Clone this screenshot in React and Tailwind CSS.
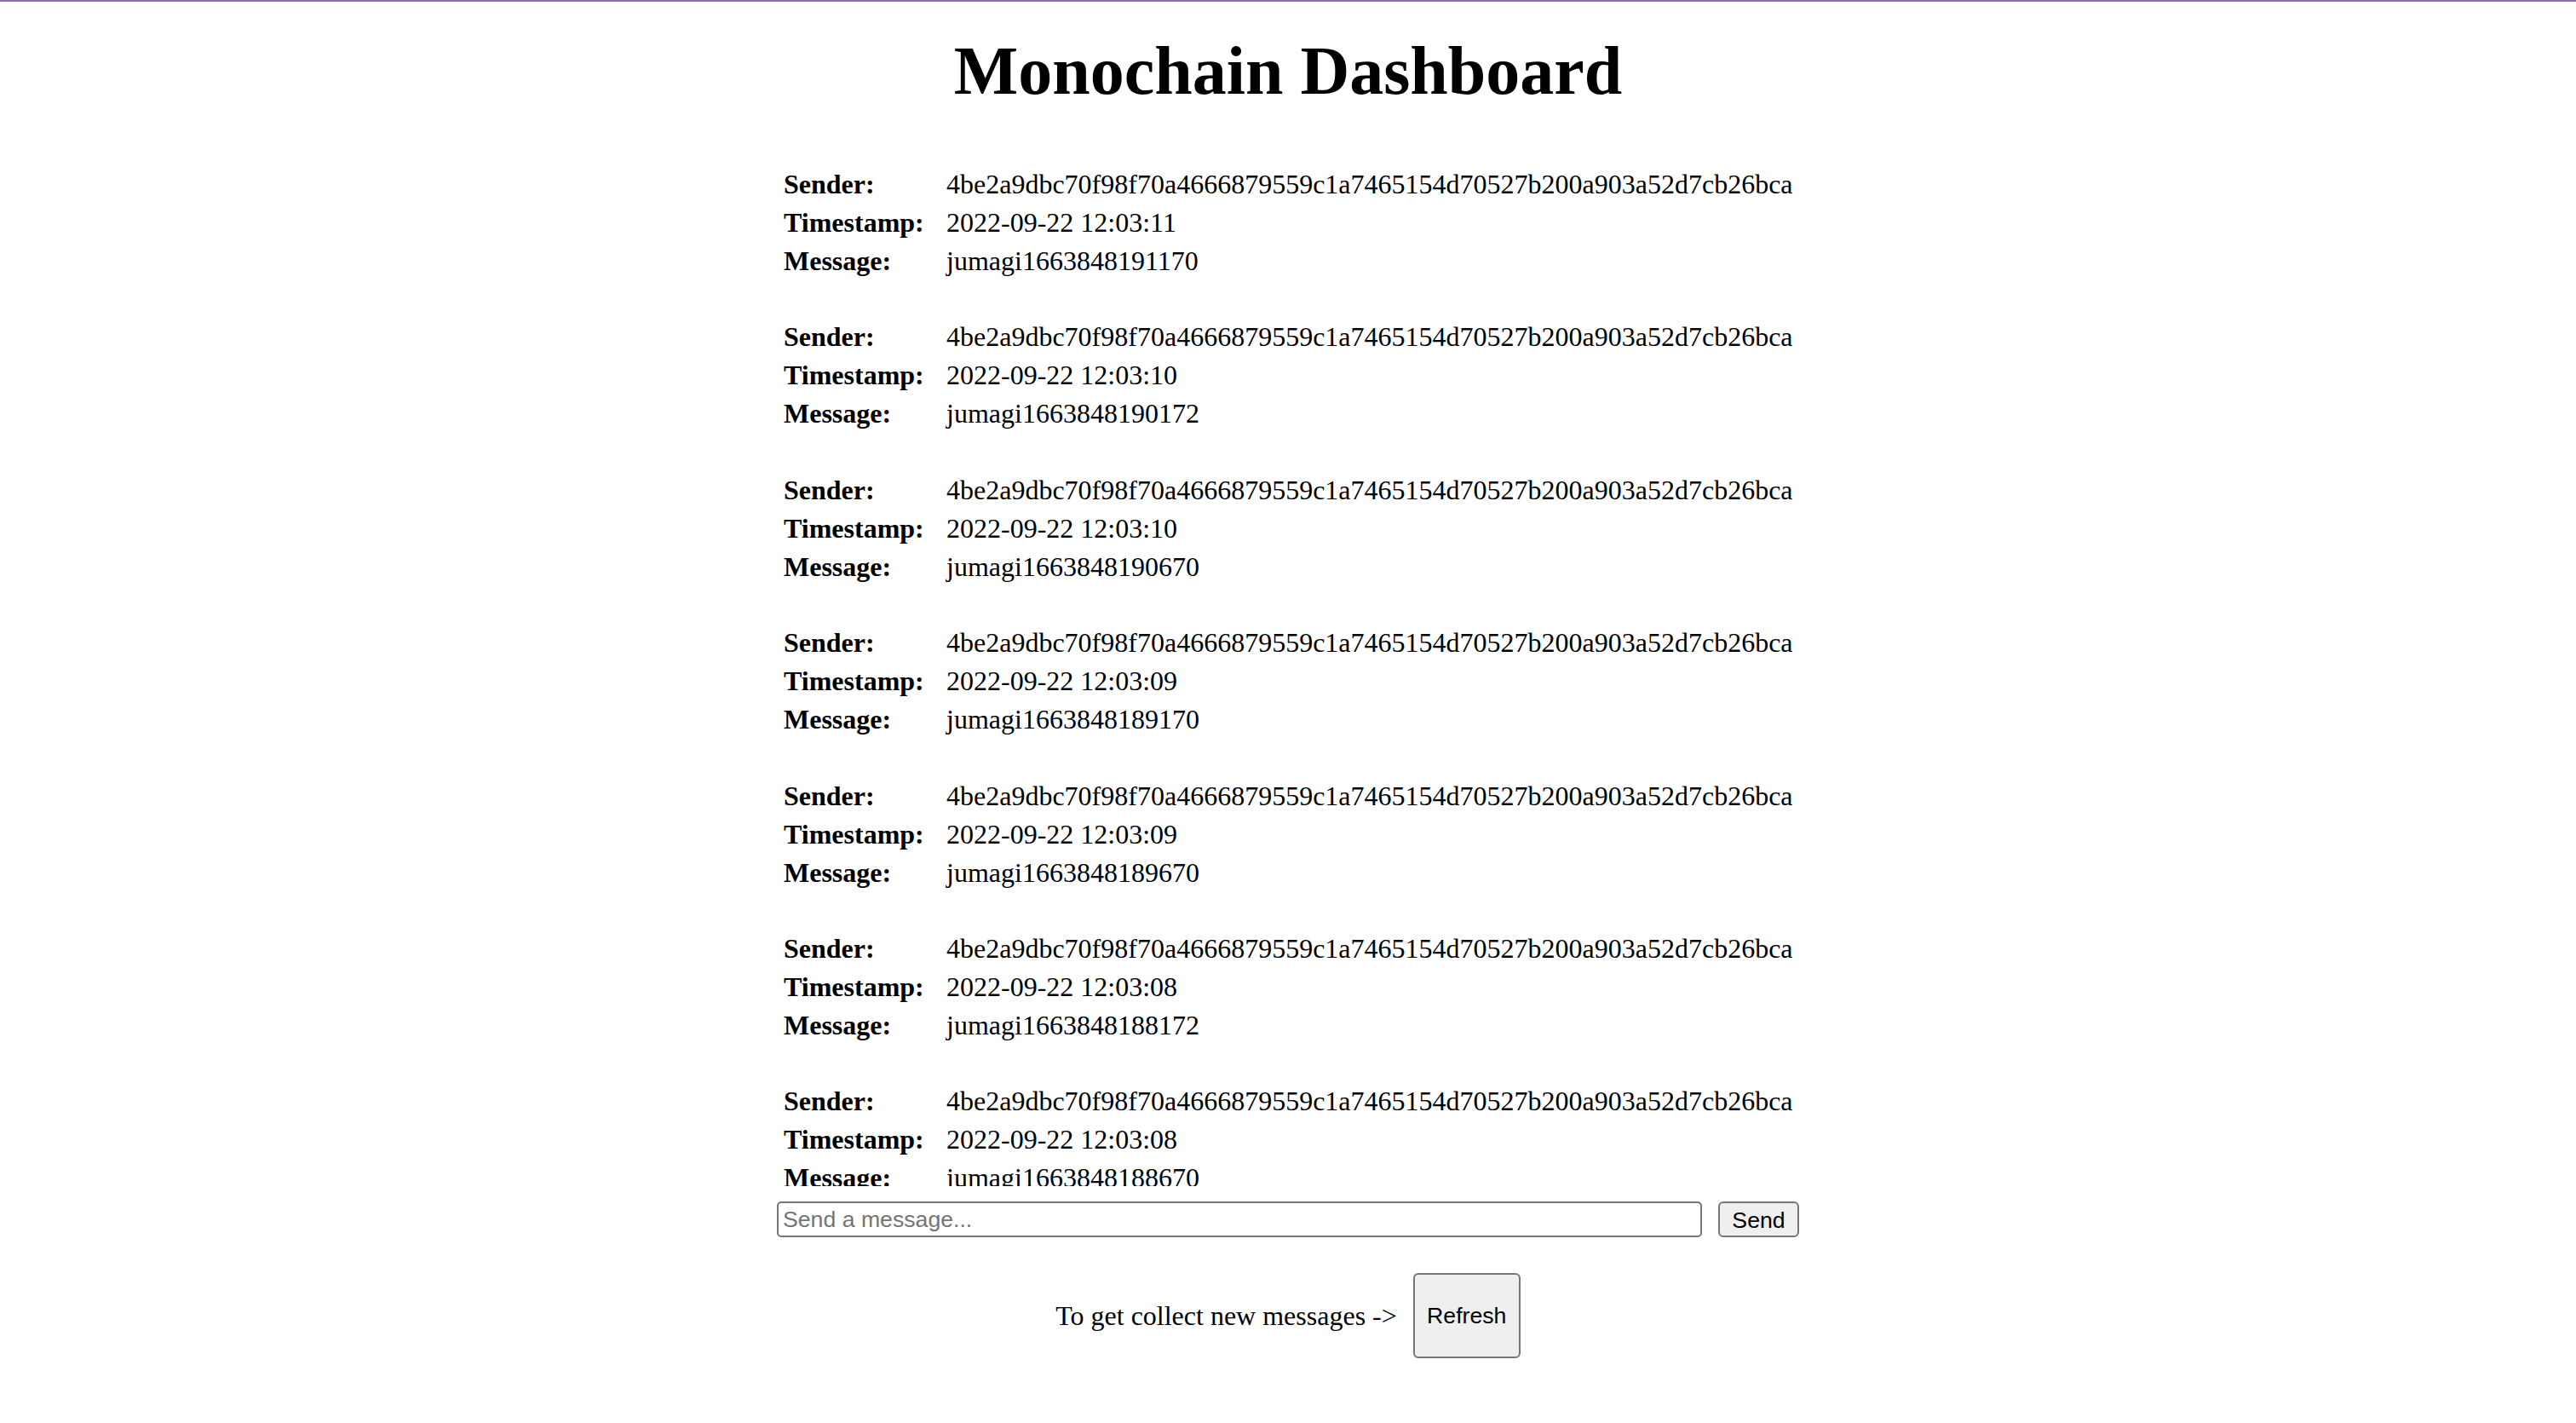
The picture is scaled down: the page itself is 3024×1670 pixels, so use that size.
import { useState } from 'react'

const sender = '4be2a9dbc70f98f70a4666879559c1a7465154d70527b200a903a52d7cb26bca'

const initialMessages = [
  { timestamp: '2022-09-22 12:03:11', message: 'jumagi1663848191170' },
  { timestamp: '2022-09-22 12:03:10', message: 'jumagi1663848190172' },
  { timestamp: '2022-09-22 12:03:10', message: 'jumagi1663848190670' },
  { timestamp: '2022-09-22 12:03:09', message: 'jumagi1663848189170' },
  { timestamp: '2022-09-22 12:03:09', message: 'jumagi1663848189670' },
  { timestamp: '2022-09-22 12:03:08', message: 'jumagi1663848188172' },
  { timestamp: '2022-09-22 12:03:08', message: 'jumagi1663848188670' },
  { timestamp: '2022-09-22 12:03:07', message: 'jumagi1663848187170' },
  { timestamp: '2022-09-22 12:03:07', message: 'jumagi1663848187670' },
]

function Row({ label, value }) {
  return (
    <div className="flex leading-[45px]">
      <div className="w-[191px] shrink-0 font-bold">{label}</div>
      <div className="whitespace-nowrap">{value}</div>
    </div>
  )
}

export default function App() {
  const [messages] = useState(initialMessages)
  const [text, setText] = useState('')

  return (
    <div className="min-h-screen bg-white border-t-2 border-[#8d6db5] font-['Liberation_Serif','Times_New_Roman',serif] text-black">
      <h1 className="mt-[37px] text-center text-[80px] font-bold leading-[88px]">Monochain Dashboard</h1>

      {/* message list, clipped like the original scroll box */}
      <div className="mx-auto mt-[67px] h-[1198px] w-[1184px] overflow-hidden text-[32px]">
        {messages.map((m, i) => (
          <div key={i} className="mb-[44.4px]">
            <Row label="Sender:" value={sender} />
            <Row label="Timestamp:" value={m.timestamp} />
            <Row label="Message:" value={m.message} />
          </div>
        ))}
      </div>

      <div className="mt-[18px] flex justify-center gap-[19px] font-['Liberation_Sans',Arial,sans-serif] text-[26.67px]">
        <input
          value={text}
          onChange={e => setText(e.target.value)}
          placeholder="Send a message..."
          className="h-[42px] w-[1086px] rounded-[5px] border-2 border-[#767676] px-[5px] text-black placeholder:text-[#757575] outline-none"
        />
        <button className="h-[42px] w-[95px] rounded-[6px] border-2 border-[#767676] bg-[#efefef] text-black">Send</button>
      </div>

      <div className="mt-[42px] flex items-center justify-center gap-[19px]">
        <span className="text-[32px]">To get collect new messages -&gt;</span>
        <button className="h-[100px] w-[126px] rounded-[6px] border-2 border-[#767676] bg-[#efefef] font-['Liberation_Sans',Arial,sans-serif] text-[26.67px] text-black">Refresh</button>
      </div>
    </div>
  )
}
